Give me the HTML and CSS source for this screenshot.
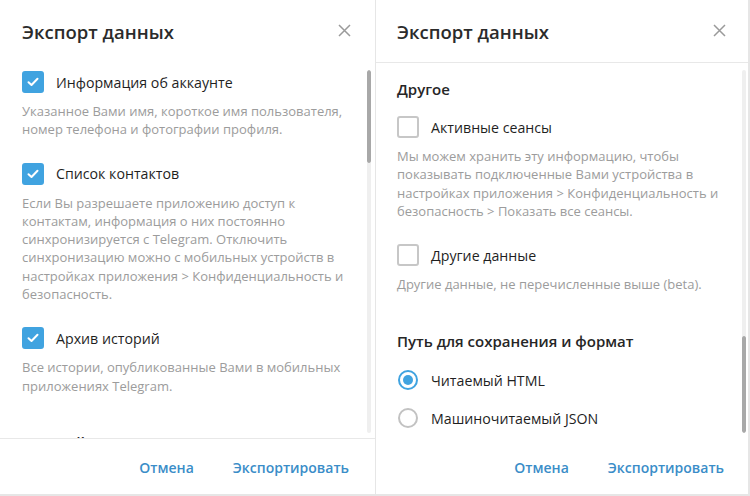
FILE: index.html
```html
<!DOCTYPE html>
<html lang="ru">
<head>
    <meta charset="UTF-8">
    <title>Экспорт данных</title>
    <link rel="stylesheet" href="styles.css">
</head>
<body>
    <div class="screen">
        <!-- Left dialog: scrolled to the top -->
        <div class="dialog dialog-left">
            <div class="dialog-header">
                <h2 class="dialog-title">Экспорт данных</h2>
                <span class="close-btn">
                    <svg width="13" height="13" viewBox="0 0 13 13"><path d="M1 1L12 12M12 1L1 12" stroke="#9a9a9a" stroke-width="1.5" fill="none"/></svg>
                </span>
            </div>
            <div class="dialog-body">
                <div class="body-content body-left">
                    <div class="option">
                        <div class="option-row">
                            <span class="checkbox checked">
                                <svg width="12" height="10" viewBox="0 0 12 10"><path d="M1.5 5.2L4.5 8L10.5 1.8" stroke="#fff" stroke-width="2" fill="none" stroke-linecap="round" stroke-linejoin="round"/></svg>
                            </span>
                            <span class="option-label">Информация об аккаунте</span>
                        </div>
                        <p class="option-desc">Указанное Вами имя, короткое имя пользователя,<br>номер телефона и фотографии профиля.</p>
                    </div>
                    <div class="option">
                        <div class="option-row">
                            <span class="checkbox checked">
                                <svg width="12" height="10" viewBox="0 0 12 10"><path d="M1.5 5.2L4.5 8L10.5 1.8" stroke="#fff" stroke-width="2" fill="none" stroke-linecap="round" stroke-linejoin="round"/></svg>
                            </span>
                            <span class="option-label">Список контактов</span>
                        </div>
                        <p class="option-desc">Если Вы разрешаете приложению доступ к<br>контактам, информация о них постоянно<br>синхронизируется с Telegram. Отключить<br>синхронизацию можно с мобильных устройств в<br>настройках приложения &gt; Конфиденциальность и<br>безопасность.</p>
                    </div>
                    <div class="option">
                        <div class="option-row">
                            <span class="checkbox checked">
                                <svg width="12" height="10" viewBox="0 0 12 10"><path d="M1.5 5.2L4.5 8L10.5 1.8" stroke="#fff" stroke-width="2" fill="none" stroke-linecap="round" stroke-linejoin="round"/></svg>
                            </span>
                            <span class="option-label">Архив историй</span>
                        </div>
                        <p class="option-desc">Все истории, опубликованные Вами в мобильных<br>приложениях Telegram.</p>
                    </div>
                    <h3 class="section-title peek">Настройки экспорта</h3>
                </div>
                <div class="scrollbar scroll-left">
                    <div class="thumb"></div>
                    <div class="track"></div>
                </div>
            </div>
            <div class="dialog-footer with-border">
                <span class="footer-btn">Отмена</span>
                <span class="footer-btn">Экспортировать</span>
            </div>
        </div>

        <!-- Right dialog: scrolled to the bottom -->
        <div class="dialog dialog-right">
            <div class="dialog-header with-border">
                <h2 class="dialog-title">Экспорт данных</h2>
                <span class="close-btn">
                    <svg width="13" height="13" viewBox="0 0 13 13"><path d="M1 1L12 12M12 1L1 12" stroke="#9a9a9a" stroke-width="1.5" fill="none"/></svg>
                </span>
            </div>
            <div class="dialog-body">
                <div class="body-content body-right">
                    <h3 class="section-title first">Другое</h3>
                    <div class="option">
                        <div class="option-row">
                            <span class="checkbox"></span>
                            <span class="option-label">Активные сеансы</span>
                        </div>
                        <p class="option-desc">Мы можем хранить эту информацию, чтобы<br>показывать подключенные Вами устройства в<br>настройках приложения &gt; Конфиденциальность и<br>безопасность &gt; Показать все сеансы.</p>
                    </div>
                    <div class="option">
                        <div class="option-row">
                            <span class="checkbox"></span>
                            <span class="option-label">Другие данные</span>
                        </div>
                        <p class="option-desc">Другие данные, не перечисленные выше (beta).</p>
                    </div>
                    <h3 class="section-title">Путь для сохранения и формат</h3>
                    <div class="radio-list">
                        <div class="option-row">
                            <span class="radio checked"></span>
                            <span class="option-label">Читаемый HTML</span>
                        </div>
                        <div class="option-row">
                            <span class="radio"></span>
                            <span class="option-label">Машиночитаемый JSON</span>
                        </div>
                    </div>
                </div>
                <div class="scrollbar scroll-right">
                    <div class="track"></div>
                    <div class="thumb"></div>
                </div>
            </div>
            <div class="dialog-footer">
                <span class="footer-btn">Отмена</span>
                <span class="footer-btn">Экспортировать</span>
            </div>
        </div>
    </div>
</body>
</html>
```

FILE: styles.css
```css
* {
    box-sizing: border-box;
    margin: 0;
    padding: 0;
}

body {
    width: 750px;
    height: 496px;
    background-color: #e6e6e6;
    font-family: "Open Sans", "Liberation Sans", sans-serif;
    color: #222;
    overflow: hidden;
}

.screen {
    display: flex;
    gap: 1px;
    height: 494px;
}

.dialog {
    background-color: #fff;
    height: 100%;
    display: flex;
    flex-direction: column;
}

.dialog-left {
    width: 375px;
}

.dialog-right {
    width: 372px;
}

.dialog-header {
    height: 63px;
    flex-shrink: 0;
    display: flex;
    align-items: center;
    justify-content: space-between;
    padding: 0 24px 0 22px;
}

.dialog-header.with-border {
    border-bottom: 1px solid #e8e8e8;
}

.dialog-right .dialog-header {
    padding: 0 22px 0 21px;
}

.dialog-title {
    font-size: 18.5px;
    font-weight: 600;
    color: #2b2b2b;
}

.close-btn {
    display: flex;
    margin-top: -2px;
}

.dialog-body {
    flex: 1;
    position: relative;
    overflow: hidden;
}

.body-content {
    padding: 0 22px 0 22px;
}

.body-left {
    padding-top: 8px;
}

.body-right {
    padding-top: 16px;
    padding-left: 21px;
}

.option {
    margin-bottom: 24px;
}

.option-row {
    display: flex;
    align-items: center;
    height: 22px;
}

.checkbox {
    width: 22px;
    height: 22px;
    border: 2px solid #c7c7c7;
    border-radius: 3px;
    flex-shrink: 0;
    display: flex;
    align-items: center;
    justify-content: center;
}

.checkbox.checked {
    background-color: #40a3e0;
    border-color: #40a3e0;
}

.option-label {
    font-size: 14.2px;
    margin-left: 12px;
    color: #1f1f1f;
}

.option-desc {
    margin-top: 9px;
    font-size: 13px;
    line-height: 18.3px;
    color: #9c9c9c;
    white-space: nowrap;
}

.section-title {
    font-size: 15px;
    font-weight: 600;
    line-height: 20px;
    color: #262626;
    margin-top: 38px;
}

.section-title.first {
    margin-top: 0;
    margin-bottom: 17px;
}

.section-title.peek {
    margin-top: 37px;
}

.radio-list {
    display: flex;
    flex-direction: column;
    gap: 16px;
    margin-top: 18px;
}

.radio {
    width: 20px;
    height: 20px;
    border-radius: 50%;
    border: 2px solid #c2c2c2;
    flex-shrink: 0;
    margin-left: 1px;
    margin-right: 1px;
    display: flex;
    align-items: center;
    justify-content: center;
}

.radio.checked {
    border-color: #40a3e0;
}

.radio.checked::after {
    content: "";
    width: 10px;
    height: 10px;
    border-radius: 50%;
    background-color: #40a3e0;
}

.scrollbar {
    position: absolute;
    top: 7px;
    width: 4px;
    height: 363px;
    display: flex;
    flex-direction: column;
    border-radius: 2px;
    overflow: hidden;
}

.scroll-left {
    right: 4px;
}

.scroll-right {
    right: 2px;
}

.thumb {
    background-color: #a8a8a8;
    border-radius: 2px;
}

.track {
    flex: 1;
    background-color: #efefef;
}

.scroll-left .thumb {
    height: 93px;
}

.scroll-right .thumb {
    height: 97px;
}

.dialog-footer {
    height: 56px;
    flex-shrink: 0;
    display: flex;
    align-items: center;
    justify-content: flex-end;
    gap: 39px;
    padding: 2px 26px 0 0;
    background-color: #fff;
}

.dialog-footer.with-border {
    border-top: 1px solid #e8e8e8;
}

.dialog-right .dialog-footer {
    padding-right: 24px;
}

.footer-btn {
    font-size: 14px;
    font-weight: 600;
    color: #3a8dc8;
}
```
